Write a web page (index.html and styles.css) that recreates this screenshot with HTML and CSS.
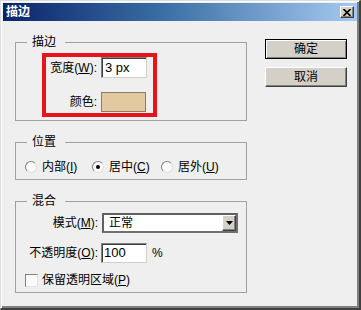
FILE: index.html
```html
<!DOCTYPE html>
<html>
<head>
<meta charset="utf-8">
<link rel="stylesheet" href="styles.css">
</head>
<body>
<div class="window">
  <div class="titlebar">
    <span class="title">描边</span>
    <span class="close"><svg width="8" height="7" viewBox="0 0 8 7"><path d="M0.5 0 L7.5 7 M7.5 0 L0.5 7" stroke="#000" stroke-width="1.6" fill="none"/></svg></span>
  </div>
  <div class="content">
    <div class="left">
      <fieldset class="group">
        <legend>描边</legend>
        <div class="g1-body">
          <div class="highlight">
            <span class="lbl">宽度(<u>W</u>):</span>
            <div class="field w46">3 px</div>
            <span class="lbl">颜色:</span>
            <div class="swatch"></div>
          </div>
        </div>
      </fieldset>
      <fieldset class="group">
        <legend>位置</legend>
        <div class="g2-body">
          <div class="opt o1"><span class="radio"></span><span>内部(<u>I</u>)</span></div>
          <div class="opt o2"><span class="radio on"><span class="dot"></span></span><span>居中(<u>C</u>)</span></div>
          <div class="opt"><span class="radio"></span><span>居外(<u>U</u>)</span></div>
        </div>
      </fieldset>
      <fieldset class="group">
        <legend>混合</legend>
        <div class="g3-body">
          <span class="lbl">模式(<u>M</u>):</span>
          <div class="select"><span class="sel-text">正常</span><span class="sel-btn"><svg width="7" height="4" viewBox="0 0 7 4"><path d="M0 0 H7 L3.5 4 Z" fill="#000"/></svg></span></div>
          <span class="lbl">不透明度(<u>O</u>):</span>
          <div class="op-row"><div class="field w46">100</div><span>%</span></div>
          <div class="check-row"><span class="check"></span><span>保留透明区域(<u>P</u>)</span></div>
        </div>
      </fieldset>
    </div>
    <div class="right">
      <div class="btn default">确定</div>
      <div class="btn">取消</div>
    </div>
  </div>
</div>
</body>
</html>
```
FILE: styles.css
```css
html, body {
  margin: 0;
  padding: 0;
  background: #efefef;
}
body {
  font-family: "Liberation Sans", "Noto Sans CJK SC", sans-serif;
  font-size: 12px;
  color: #000;
}
.window {
  width: 361px;
  height: 310px;
  box-sizing: border-box;
  background: #efefef;
  border-style: solid;
  border-width: 1px 2px 2px 1px;
  border-color: #dcdcdc #404040 #404040 #dcdcdc;
  padding: 2px 2px 2px 2px;
  box-shadow: inset 1px 1px 0 #fff, inset -2px -2px 0 #808080;
  display: flex;
  flex-direction: column;
}
.titlebar {
  height: 18px;
  background: linear-gradient(to right, #0a246a 0%, #3a6ea5 45%, #a6caf0 100%);
  display: flex;
  align-items: center;
  justify-content: space-between;
  padding: 0 3px 0 3px;
}
.title {
  color: #fff;
  font-weight: bold;
  font-size: 12px;
  line-height: 14px;
}
.close {
  width: 14px;
  height: 12px;
  box-sizing: border-box;
  background: #d4d0c8;
  border-style: solid;
  border-width: 1px;
  border-color: #fff #404040 #404040 #fff;
  box-shadow: inset -1px -1px 0 #808080;
  display: flex;
  align-items: center;
  justify-content: center;
}
.close svg { display: block; }
.content {
  display: flex;
  flex: 1;
}
.left {
  padding: 14px 0 0 12px;
  width: 232px;
  display: flex;
  flex-direction: column;
  gap: 14px;
}
.group {
  margin: 0;
  padding: 0;
  border: 1px solid #a0a0a0;
  min-width: 0;
}
.group legend {
  margin-left: 11px;
  padding: 0 9px 0 5px;
  line-height: 14px;
  font-size: 12px;
}
.g1-body {
  display: flex;
  align-items: flex-start;
  padding: 4px 0 3px 26px;
}
.highlight {
  border: 4px solid #e8141c;
  padding: 0 6px 1px 1px;
  display: grid;
  grid-template-columns: 50px 46px;
  column-gap: 4px;
  row-gap: 14px;
  align-items: center;
}
.lbl {
  text-align: right;
  white-space: nowrap;
  line-height: 14px;
}
.field {
  height: 21px;
  box-sizing: border-box;
  background: #fff;
  border-style: solid;
  border-width: 1px;
  border-color: #808080 #d4d0c8 #d4d0c8 #808080;
  box-shadow: inset 1px 1px 0 #404040;
  padding: 2px 0 0 3px;
  font-size: 13px;
  line-height: 16px;
}
.w46 { width: 46px; }
.swatch {
  width: 45px;
  height: 20px;
  box-sizing: border-box;
  background: #e3c9a0;
  border: 1px solid #8c7d6a;
}
.g2-body {
  display: flex;
  align-items: center;
  height: 16px;
  padding: 10px 0 4px 9px;
}
.opt {
  display: flex;
  align-items: center;
  gap: 5px;
  line-height: 14px;
}
.o1 { width: 67px; }
.o2 { width: 69px; }
.radio {
  width: 12px;
  height: 12px;
  box-sizing: border-box;
  border-radius: 50%;
  border: 1px solid;
  border-color: #808080 #e0e0e0 #e0e0e0 #808080;
  background: #fafafa;
  display: flex;
  align-items: center;
  justify-content: center;
}
.dot {
  width: 4px;
  height: 4px;
  border-radius: 50%;
  background: #000;
}
.g3-body {
  display: grid;
  grid-template-columns: 73px auto;
  column-gap: 3px;
  row-gap: 10px;
  align-items: center;
  padding: 5px 0 4px 9px;
}
.select {
  width: 136px;
  height: 20px;
  box-sizing: border-box;
  background: #fff;
  border: 2px solid;
  border-color: #606060 #707070 #707070 #606060;
  display: flex;
  align-items: center;
  justify-content: space-between;
  margin-left: 1px;
}
.sel-text {
  padding-left: 5px;
  line-height: 14px;
}
.sel-btn {
  width: 14px;
  height: 16px;
  box-sizing: border-box;
  background: #d4d0c8;
  border-style: solid;
  border-width: 1px;
  border-color: #fff #404040 #404040 #fff;
  box-shadow: inset -1px -1px 0 #808080;
  display: flex;
  align-items: center;
  justify-content: center;
}
.sel-btn svg { display: block; }
.op-row {
  display: flex;
  align-items: center;
  gap: 5px;
}
.op-row .field {
  height: 20px;
  padding-top: 1px;
  padding-left: 2px;
}
.check-row {
  grid-column: 1 / 3;
  display: flex;
  align-items: center;
  gap: 4px;
  height: 16px;
  margin-top: -1px;
  line-height: 14px;
}
.check {
  width: 13px;
  height: 13px;
  box-sizing: border-box;
  background: #fafafa;
  border: 1px solid;
  border-color: #808080 #e0e0e0 #e0e0e0 #808080;
}
.right {
  margin-left: 18px;
  padding-top: 18px;
  display: flex;
  flex-direction: column;
  gap: 8px;
}
.btn {
  width: 82px;
  height: 20px;
  box-sizing: border-box;
  background: #d4d0c8;
  border-style: solid;
  border-width: 1px;
  border-color: #fff #404040 #404040 #fff;
  box-shadow: inset -1px -1px 0 #808080;
  display: flex;
  align-items: center;
  justify-content: center;
  line-height: 14px;
}
.btn.default {
  border-color: #000;
  box-shadow: inset 1px 1px 0 #fff, inset -1px -1px 0 #808080;
}
```
